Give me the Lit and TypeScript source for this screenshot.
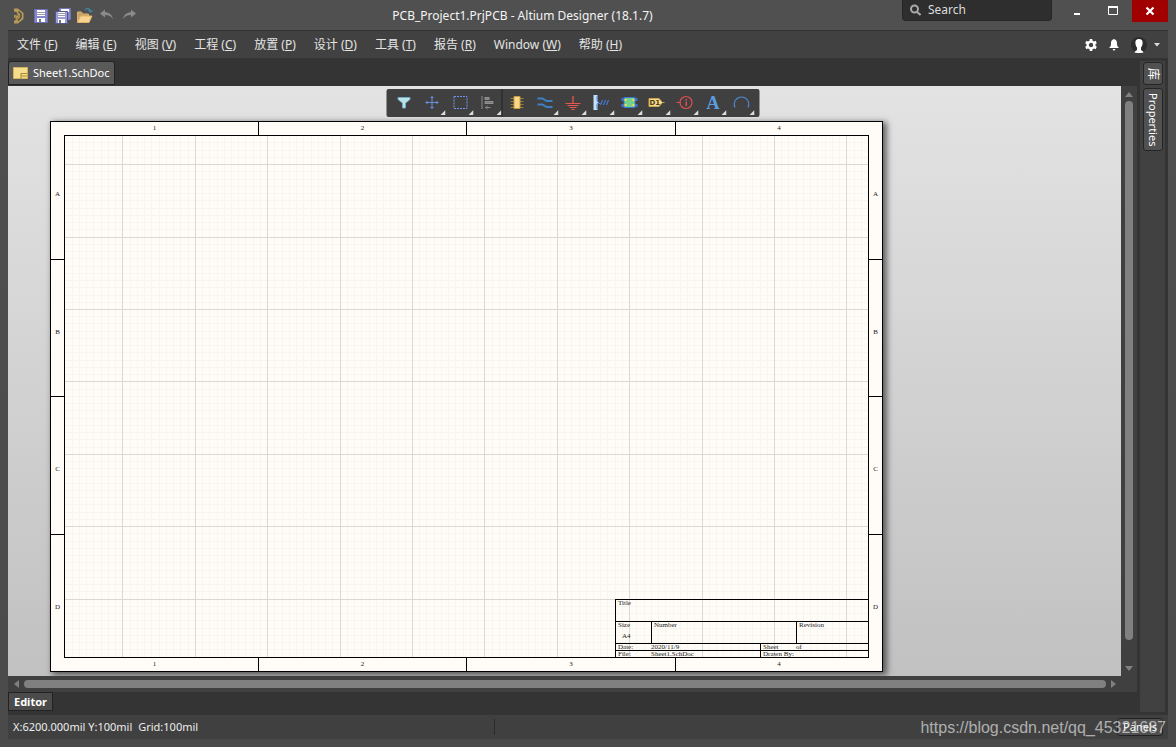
import { LitElement, html, css, svg, nothing } from "lit";
import { customElement } from "lit/decorators.js";

const MENUS: [string, string][] = [
  ["文件", "F"],
  ["编辑", "E"],
  ["视图", "V"],
  ["工程", "C"],
  ["放置", "P"],
  ["设计", "D"],
  ["工具", "T"],
  ["报告", "R"],
  ["Window", "W"],
  ["帮助", "H"],
];

const QUICK_ACTIONS = [
  {
    label: "Save",
    icon: svg`<path d="M2.500 2.500h13v13h-13z" fill="#8587c6" stroke="#6e70b6"/><path d="M5 3h8v6H5z" fill="#fff"/><path d="M5 5.500h8M5 7.500h8" stroke="#9a9aa8"/><path d="M5 11h8v4H5z" fill="#fff"/><path d="M7 12h2v3H7z" fill="#777"/>`,
  },
  {
    label: "Save All",
    icon: svg`<path d="M5.500 1.500h11v11h-11z" fill="#8587c6" stroke="#7577bb"/><path d="M7 2h8v3H7z" fill="#fff"/><path d="M1.500 4.500h12v12h-12z" fill="#9b9dda" stroke="#55578f"/><path d="M4 5h7v5H4z" fill="#fff"/><path d="M4 6.500h7M4 8.500h7" stroke="#9a9aa8"/><path d="M4 12h7v4H4z" fill="#fff"/><path d="M5 13h2v3H5z" fill="#777"/>`,
  },
  {
    label: "Open",
    icon: svg`<path d="M1.500 15V5h4l1 2h6v3" fill="#c9a163" stroke="#d9b277"/><path d="M1.500 15.500 4.500 9h11.500L13 15.500z" fill="#f7d48f" stroke="#e2b46a"/><path d="M9 2.500c3-1.500 5-1 5.500 2M12.500 3.500l2 1.500L16.500 3.500" fill="none" stroke="#3f86ad" stroke-width="1.200"/>`,
  },
  {
    label: "Undo",
    icon: svg`<path d="M2 6.500 7 2.500v2.800c4 0 7 2 8 7-2-3-4-4.300-8-4.300v2.500z" fill="#8a8a8a"/>`,
  },
  {
    label: "Redo",
    icon: svg`<path d="M16 6.500 11 2.500v2.800c-4 0-7 2-8 7 2-3 4-4.300 8-4.300v2.500z" fill="#8a8a8a"/>`,
  },
];

interface Tool {
  label: string;
  icon: unknown;
  menu: boolean;
  divided?: boolean;
}

const TOOLS: Tool[] = [
  {
    label: "Filter",
    menu: false,
    icon: svg`<path d="M3.500 4.500h12v2L11 10v5H8v-5L3.500 6.500z" fill="#b9e2ea" stroke="#74abc0"/>`,
  },
  {
    label: "Move",
    menu: true,
    icon: svg`<path d="M3 9.500h13M9.500 3v13M4.500 8v3M14.500 8v3M8 4.500h3M8 14.500h3" stroke="#6a8fe0"/>`,
  },
  {
    label: "Select",
    menu: true,
    icon: svg`<path d="M3.500 3.500h13v12h-13z" fill="none" stroke="#7295ec" stroke-dasharray="2 1"/>`,
  },
  {
    label: "Align",
    menu: true,
    icon: svg`<path d="M3.500 3v13" stroke="#8a8a8a"/><path d="M6 4h5v3H6z" fill="#8a8a8a"/><path d="M6.500 8.500h8v2h-8z" fill="#777" stroke="#929292"/><path d="M7 14.500h5M9 13l-2 1.500L9 16" stroke="#8a8a8a" fill="none"/>`,
  },
  {
    label: "Place Part",
    menu: false,
    divided: true,
    icon: svg`<path d="M3 5.500h13M3 8.500h13M3 11.500h13M3 14.500h13" stroke="#97803a"/><path d="M6.500 3.500h6v12h-6z" fill="#fbd98c" stroke="#c79b3e"/>`,
  },
  {
    label: "Wire",
    menu: true,
    icon: svg`<path d="M2 5.500h5l4 2.500h6M2 11.500h5l4 2.500h6" fill="none" stroke="#3f7fc4" stroke-width="2"/>`,
  },
  {
    label: "Power Port",
    menu: true,
    icon: svg`<path d="M9.500 3v7" stroke="#e8574f" stroke-width="1.300"/><path d="M2 10.500h15M4 12.500h11M6 14.500h7M8 16.500h3" stroke="#e8574f"/>`,
  },
  {
    label: "Harness",
    menu: true,
    icon: svg`<path d="M2 2h4v5l1 2.500L6 12v5H2z" fill="#c5defa"/><path d="M5.500 3v5l1.500 1.500-1.500 1.500v5M7 10.500h2" fill="none" stroke="#4a84dd"/><path d="m9 12 2-5M12 12l2-5M15 12l2-5" stroke="#4478d0" stroke-width="1.200"/>`,
  },
  {
    label: "Sheet Symbol",
    menu: true,
    icon: svg`<path d="M4.500 4.500h11v10h-11z" fill="#74d08d" stroke="#3f78d0"/><path d="M2 5h3v3H2zM2 11h3v3H2zM15 5h3v3h-3zM15 11h3v3h-3z" fill="#3d75d6"/><path d="M5 6h2v2H5zM5 11h2v2H5zM13 6h2v2h-2zM13 11h2v2h-2z" fill="#f6e04c"/>`,
  },
  {
    label: "Port",
    menu: true,
    icon: svg`<path d="M1.500 5.500h10l3.500 4-3.500 4h-10z" fill="#f8dc8b" stroke="#cda54b"/><path d="M15 9.500h2" stroke="#cda54b"/><text x="2" y="12" class="glyph-small">D1</text>`,
  },
  {
    label: "Directive",
    menu: true,
    icon: svg`<circle cx="10.500" cy="9.500" r="6" fill="none" stroke="#e04f4f" stroke-width="1.200"/><path d="M1 9.500h4" stroke="#e04f4f"/><path d="M10 6h1.500v1.500H10zM10 8.500h1.500V13H10z" fill="#e04f4f"/>`,
  },
  {
    label: "Text String",
    menu: true,
    icon: svg`<text x="3" y="16" class="glyph-large">A</text>`,
  },
  {
    label: "Arc",
    menu: true,
    icon: svg`<path d="M3.500 14.500c-2.500-6 2-10.500 6.500-10.500s9 4.500 6.500 10.500" fill="none" stroke="#4b87c9" stroke-width="1.200"/>`,
  },
];

const base = css`
  * {
    box-sizing: border-box;
  }
  button {
    margin: 0;
    padding: 0;
    border: 0;
    background: none;
    color: inherit;
    font: inherit;
  }
  svg {
    display: block;
  }
`;

/** Top caption strip: quick actions, window title, search and window controls. */
@customElement("title-bar")
export class TitleBar extends LitElement {
  static styles = [
    base,
    css`
      :host {
        display: grid;
        grid-template-columns: 1fr auto 1fr;
        height: 30px;
        color: #f4f4f4;
      }
      .quick {
        display: flex;
        align-items: center;
        gap: 4px;
        padding-left: 5px;
      }
      .logo {
        margin-right: 3px;
      }
      h1 {
        margin: 0;
        font-size: 12px;
        font-weight: 400;
        line-height: 32px;
        white-space: pre;
        padding-right: 131px;
      }
      .right {
        display: flex;
        align-items: flex-start;
        justify-content: flex-end;
      }
      .search {
        display: flex;
        align-items: center;
        width: 150px;
        height: 21px;
        margin-right: 8px;
        padding-left: 7px;
        gap: 7px;
        background: #2e2e2e;
        border: 1px solid #262626;
        border-top: 0;
        border-radius: 0 0 4px 4px;
      }
      .search input {
        flex: 1;
        min-width: 0;
        padding: 0;
        border: 0;
        background: none;
        outline: none;
        color: #ddd;
        font: inherit;
      }
      .search input::placeholder {
        color: #dcdcdc;
        opacity: 1;
      }
      .win {
        display: grid;
        place-items: center;
        width: 36px;
        height: 22px;
      }
      .close {
        background: #a00000;
      }
    `,
  ];

  render() {
    return html`
      <div class="quick">
        <svg class="logo" width="12" height="18" viewBox="0 0 12 18">
          <path d="M1 1.500h4l5.500 4.500v6L5 16.500H1V14l2.500-2L1 10.500V8l4 .500L3.500 5 1 4.500z" fill="#b79a55" />
          <path d="M5.500 4.500 8 7v3.500l-3 3" fill="none" stroke="#4e4e4e" stroke-width="1.500" />
          <path d="M1 11l4-3.500 1.500 1.500-3 3.500" fill="none" stroke="#8f7641" />
        </svg>
        ${QUICK_ACTIONS.map(
          (a) => html`<button aria-label=${a.label}>
            <svg width="18" height="18" viewBox="0 0 18 18">${a.icon}</svg>
          </button>`
        )}
      </div>
      <h1>PCB_Project1.PrjPCB - Altium Designer (18.1.7)</h1>
      <div class="right">
        <label class="search">
          <svg width="11" height="12" viewBox="0 0 11 12">
            <circle cx="4.500" cy="5" r="3.500" fill="none" stroke="#aaa" stroke-width="2" />
            <path d="m7 8 3.500 3" stroke="#aaa" stroke-width="2" />
          </svg>
          <input type="text" placeholder="Search" aria-label="Search" />
        </label>
        <button class="win" aria-label="Minimize">
          <svg width="12" height="12" viewBox="0 0 12 12"><path d="M2 8h6v2H2z" fill="#fff" /></svg>
        </button>
        <button class="win" aria-label="Maximize">
          <svg width="12" height="12" viewBox="0 0 12 12">
            <path d="M.500 1.500h9v8h-9z" fill="none" stroke="#fff" />
            <path d="M0 1h10v2H0z" fill="#fff" />
          </svg>
        </button>
        <button class="win close" aria-label="Close">
          <svg width="12" height="12" viewBox="0 0 12 12">
            <path d="m2.500 2.500 7 7m0-7-7 7" stroke="#fff" stroke-width="2.200" />
          </svg>
        </button>
      </div>
    `;
  }
}

/** Main menu with the account controls at its right end. */
@customElement("menu-bar")
export class MenuBar extends LitElement {
  static styles = [
    base,
    css`
      :host {
        display: flex;
        justify-content: space-between;
        height: 28px;
        border-top: 1px solid #333;
        background: #414141;
        color: #e4e4e4;
      }
      nav {
        display: flex;
      }
      nav button {
        padding: 0 9px;
        font-size: 12px;
        line-height: 27px;
        white-space: nowrap;
      }
      .tools {
        display: flex;
        align-items: center;
        gap: 11px;
        padding-right: 8px;
      }
      .account {
        display: flex;
        align-items: center;
        gap: 7px;
      }
    `,
  ];

  render() {
    return html`
      <nav>${MENUS.map(([name, key]) => html`<button>${name} (<u>${key}</u>)</button>`)}</nav>
      <div class="tools">
        <button aria-label="Settings">
          <svg width="12" height="12" viewBox="0 0 12 12">
            <circle cx="6" cy="6" r="3.400" fill="none" stroke="#fff" stroke-width="2.400" />
            <path d="M6 0v2M6 10v2M.800 3l1.800 1M9.400 8l1.800 1M.800 9l1.800-1M9.400 4l1.800-1" stroke="#fff" stroke-width="2.600" />
          </svg>
        </button>
        <button aria-label="Notifications">
          <svg width="12" height="12" viewBox="0 0 12 12">
            <path d="M6 0c3 1 3 3 3 5s1 3 2 4H1c1-1 2-2 2-4s0-4 3-5zM4.500 10h3L6 12z" fill="#fff" />
          </svg>
        </button>
        <button class="account" aria-label="Account">
          <svg width="16" height="16" viewBox="0 0 16 16">
            <circle cx="8" cy="8" r="8" fill="#2c2c2c" />
            <path d="M8 2c3 0 4 2 3.500 5-.300 2-1 3-1.500 3.500V13c1 .500 2 1 2.500 2.500-3 .800-6 .800-9 0C4 14 5 13.500 6 13v-2.500C5.500 10 4.800 9 4.500 7 4 4 5 2 8 2z" fill="#fff" />
          </svg>
          <svg width="6" height="4" viewBox="0 0 6 4"><path d="M0 0h6L3 3.500z" fill="#ddd" /></svg>
        </button>
      </div>
    `;
  }
}

/** Floating strip of placement tools. */
@customElement("active-bar")
export class ActiveBar extends LitElement {
  static styles = [
    base,
    css`
      :host {
        display: flex;
        height: 28px;
        padding: 0 5px 0 3px;
        border-radius: 2px;
        background: #404040;
      }
      button {
        display: grid;
        width: 28px;
        height: 28px;
      }
      .divided {
        width: 29px;
        border-left: 1px solid #222;
      }
      .icon {
        grid-area: 1 / 1;
        place-self: center;
        margin-left: 2px;
      }
      .corner {
        grid-area: 1 / 1;
        place-self: end;
        margin-bottom: 2px;
      }
      .glyph-small {
        font: 700 7px "DejaVu Sans", sans-serif;
        fill: #4d3d18;
      }
      .glyph-large {
        font: 700 18px "Liberation Serif", serif;
        fill: #5b9de2;
      }
    `,
  ];

  render() {
    return TOOLS.map(
      (t) => html`<button class=${t.divided ? "divided" : ""} aria-label=${t.label}>
        <svg class="icon" width="20" height="20" viewBox="0 0 20 20">${t.icon}</svg>
        ${t.menu
          ? html`<svg class="corner" width="5" height="5" viewBox="0 0 5 5"><path d="M5 0v5H0z" fill="#ddd" /></svg>`
          : nothing}
      </button>`
    );
  }
}

/** A4 schematic sheet: zone border, drawing grid and title block. */
@customElement("schematic-sheet")
export class SchematicSheet extends LitElement {
  static styles = [
    base,
    css`
      :host {
        display: grid;
        grid-template: 13px 1fr 13px / 13px 1fr 13px;
        width: 833px;
        height: 551px;
        border: 1px solid #000;
        background: #fffcf7;
        box-shadow: 3px 2px 6px 1px rgba(0, 0, 0, 0.55);
        color: #222;
        font: 7px/7px "Liberation Serif", "Times New Roman", serif;
      }
      .zones {
        display: grid;
        text-align: center;
      }
      .across {
        grid-template-columns: 207px 208px 209px 1fr;
        line-height: 13px;
      }
      .down {
        grid-template-rows: 137px 137px 138px 1fr;
      }
      .top {
        grid-area: 1 / 1 / 2 / -1;
      }
      .bottom {
        grid-area: 3 / 1 / 4 / -1;
      }
      .left {
        grid-area: 1 / 1 / -1 / 2;
      }
      .right {
        grid-area: 1 / 3 / -1 / 4;
      }
      .across span + span {
        border-left: 1px solid #000;
      }
      .down span {
        display: grid;
        place-content: center;
        padding-top: 8px;
      }
      .down span + span {
        border-top: 1px solid #000;
      }
      .area {
        display: grid;
        grid-area: 2 / 2 / 3 / 3;
        border: 1px solid #000;
      }
      .grid {
        grid-area: 1 / 1;
        width: 100%;
        height: 100%;
      }
      .minor {
        stroke: #f6f5ef;
      }
      .major {
        stroke: #d8d8d4;
      }
      .block {
        grid-area: 1 / 1;
        place-self: end;
        width: 253px;
        border: 1px solid #000;
        border-width: 1px 0 0 1px;
      }
      .row {
        display: grid;
      }
      .row + .row {
        border-top: 1px solid #000;
      }
      .title {
        height: 21px;
        padding-left: 2px;
      }
      .size {
        grid-template-columns: 35px 145px 1fr;
        height: 22px;
      }
      .meta {
        grid-template-columns: 144px 1fr;
        height: 7px;
        line-height: 6px;
      }
      .row > span {
        padding-left: 2px;
      }
      .row > span + span {
        border-left: 1px solid #000;
      }
      .pair {
        display: grid;
        grid-template-columns: 33px 1fr;
      }
      .format {
        display: block;
        padding: 4px 0 0 4px;
      }
    `,
  ];

  /** Line positions inside the drawing area, counted from the sheet's lower-left corner. */
  private lines(step: number, limit: number) {
    const out: number[] = [];
    for (let i = 1; i * step < limit; i++) {
      const at = Math.round(i * step) - 15;
      if (at >= 0) out.push(at + 0.5);
    }
    return out;
  }

  private mesh(name: string, step: number) {
    const d =
      this.lines(step, 818).map((x) => `M${x} 0V521`).join("") +
      this.lines(step, 536).map((y) => `M0 ${521 - y}H803`).join("");
    return svg`<path class=${name} d=${d} />`;
  }

  render() {
    const cols = ["1", "2", "3", "4"].map((n) => html`<span>${n}</span>`);
    const rows = ["A", "B", "C", "D"].map((n) => html`<span>${n}</span>`);
    return html`
      <div class="zones across top">${cols}</div>
      <div class="zones down left">${rows}</div>
      <div class="area">
        <svg class="grid" shape-rendering="crispEdges">
          ${this.mesh("minor", 7.24)} ${this.mesh("major", 72.4)}
        </svg>
        <div class="block">
          <div class="row title">Title</div>
          <div class="row size">
            <span>Size<span class="format">A4</span></span><span>Number</span><span>Revision</span>
          </div>
          <div class="row meta">
            <span class="pair"><span>Date:</span><span>2020/11/9</span></span>
            <span class="pair"><span>Sheet</span><span>of</span></span>
          </div>
          <div class="row meta">
            <span class="pair"><span>File:</span><span>Sheet1.SchDoc</span></span><span>Drawn By:</span>
          </div>
        </div>
      </div>
      <div class="zones down right">${rows}</div>
      <div class="zones across bottom">${cols}</div>
    `;
  }
}

@customElement("app-root")
export class AppRoot extends LitElement {
  static styles = [
    base,
    css`
      :host {
        display: flex;
        flex-direction: column;
        min-height: 100vh;
        padding: 0 8px 8px;
        box-sizing: border-box;
        position: relative;
        background: linear-gradient(#505050, #4a4a4a);
        color: #ededed;
        font: 12px/16px "Noto Sans", "Noto Sans CJK SC", sans-serif;
      }
      .body {
        flex: 1;
        display: flex;
        gap: 3px;
        padding-right: 3px;
        background: #343434;
      }
      .editor {
        flex: 1;
        min-width: 0;
        display: flex;
        flex-direction: column;
      }
      .tabs {
        height: 28px;
        padding-top: 3px;
      }
      .tab {
        display: flex;
        align-items: center;
        gap: 5px;
        height: 24px;
        padding: 0 4px;
        border: 1px solid #222;
        border-radius: 3px 3px 0 0;
        background: #5a5a5a;
        color: #fff;
        font-size: 11px;
      }
      .view {
        flex: 1;
        position: relative;
        display: grid;
        grid-template: 1fr 16px / 1fr 16px;
        background: #404040;
      }
      .canvas {
        overflow: hidden;
        padding: 35px 0 4px 42px;
        background: linear-gradient(#e3e3e3, #c1c1c1);
      }
      .toolbar {
        position: absolute;
        top: 3px;
        left: 50%;
        transform: translateX(-50%);
      }
      .scroll {
        display: flex;
        align-items: center;
        gap: 4px;
      }
      .vertical {
        flex-direction: column;
        padding: 6px 0 5px;
      }
      .vertical .thumb {
        width: 8px;
        margin-bottom: 22px;
      }
      .horizontal {
        padding: 0 4px 0 5px;
      }
      .thumb {
        flex: 1;
        height: 8px;
        border-radius: 4px;
        background: #808080;
      }
      .modes {
        height: 23px;
      }
      .mode {
        height: 19px;
        padding: 0 5px;
        border: 1px solid #222;
        background: #4b4b4b;
        color: #fff;
        font-size: 11px;
        font-weight: 700;
        line-height: 17px;
      }
      .dock {
        display: flex;
        flex-direction: column;
        align-items: center;
        gap: 3px;
        width: 25px;
        margin: 3px 0;
        padding-top: 1px;
        background: #414141;
      }
      .dock button {
        width: 20px;
        padding: 4px 0;
        border: 1px solid #252525;
        border-radius: 3px;
        background: #515151;
        color: #fff;
        font-size: 11px;
        line-height: 18px;
      }
      .dock .square {
        height: 23px;
        padding: 0;
        font-size: 12px;
      }
      .square span {
        display: block;
        transform: rotate(90deg);
      }
      .long {
        writing-mode: vertical-rl;
      }
      .status {
        display: flex;
        align-items: center;
        height: 24px;
        padding: 0 5px;
        background: #404040;
        font-size: 11px;
      }
      .coords {
        display: flex;
        flex: 0 0 482px;
        gap: 6px;
        border-right: 1px solid #2c2c2c;
        white-space: pre;
      }
      .panels {
        height: 18px;
        margin-left: auto;
        padding: 0 5px;
        border: 1px solid #222;
        border-radius: 3px;
        background: #505050;
        color: #fff;
        line-height: 16px;
      }
      .watermark {
        position: absolute;
        right: 10px;
        bottom: 10px;
        font: 16px/18px "Liberation Sans", Arial, sans-serif;
        color: rgba(225, 225, 225, 0.7);
      }
    `,
  ];

  render() {
    return html`
      <title-bar></title-bar>
      <menu-bar></menu-bar>
      <div class="body">
        <main class="editor">
          <div class="tabs">
            <button class="tab">
              <svg width="15" height="12" viewBox="0 0 15 12">
                <path d="M.500.500h14v11H.500z" fill="#f6dd8c" stroke="#cfb45e" />
                <path d="M8 6.500h6.500M8 9h6.500M8 6v5.500" stroke="#a58a3c" />
              </svg>
              Sheet1.SchDoc
            </button>
          </div>
          <div class="view">
            <div class="canvas"><schematic-sheet></schematic-sheet></div>
            <div class="scroll vertical">
              <svg width="8" height="5" viewBox="0 0 8 5"><path d="M4 0l4 5H0z" fill="#808080" /></svg>
              <div class="thumb"></div>
              <svg width="8" height="5" viewBox="0 0 8 5"><path d="M4 5l4-5H0z" fill="#808080" /></svg>
            </div>
            <div class="scroll horizontal">
              <svg width="7" height="8" viewBox="0 0 7 8"><path d="M1 4l5-4v8z" fill="#808080" /></svg>
              <div class="thumb"></div>
              <svg width="7" height="8" viewBox="0 0 7 8"><path d="M6 4L1 0v8z" fill="#808080" /></svg>
            </div>
            <active-bar class="toolbar"></active-bar>
          </div>
          <div class="modes"><button class="mode">Editor</button></div>
        </main>
        <aside class="dock">
          <button class="square"><span>库</span></button>
          <button class="long">Properties</button>
        </aside>
      </div>
      <footer class="status">
        <div class="coords">
          <output>X:6200.000mil Y:100mil</output>
          <output>Grid:100mil</output>
        </div>
        <button class="panels">Panels</button>
      </footer>
      <div class="watermark">https://blog.csdn.net/qq_45321687</div>
    `;
  }
}
